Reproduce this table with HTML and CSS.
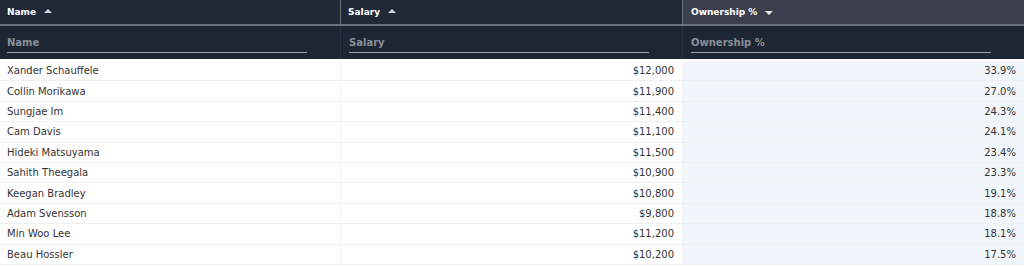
FILE: index.html
```html
<!DOCTYPE html>
<html>
<head>
<meta charset="utf-8">
<link rel="stylesheet" href="styles.css">
</head>
<body>
<div class="grid">
  <div class="head">
    <div class="hcell"><span>Name</span><span class="arrow up"></span></div>
    <div class="hcell"><span>Salary</span><span class="arrow up"></span></div>
    <div class="hcell sorted"><span>Ownership %</span><span class="arrow down"></span></div>
  </div>
  <div class="filters">
    <div class="fcell"><input class="finput" placeholder="Name"></div>
    <div class="fcell"><input class="finput" placeholder="Salary"></div>
    <div class="fcell"><input class="finput" placeholder="Ownership %"></div>
  </div>
  <div class="body">
    <div class="row"><div class="c">Xander Schauffele</div><div class="c num">$12,000</div><div class="c num own">33.9%</div></div>
    <div class="row"><div class="c">Collin Morikawa</div><div class="c num">$11,900</div><div class="c num own">27.0%</div></div>
    <div class="row"><div class="c">Sungjae Im</div><div class="c num">$11,400</div><div class="c num own">24.3%</div></div>
    <div class="row"><div class="c">Cam Davis</div><div class="c num">$11,100</div><div class="c num own">24.1%</div></div>
    <div class="row"><div class="c">Hideki Matsuyama</div><div class="c num">$11,500</div><div class="c num own">23.4%</div></div>
    <div class="row"><div class="c">Sahith Theegala</div><div class="c num">$10,900</div><div class="c num own">23.3%</div></div>
    <div class="row"><div class="c">Keegan Bradley</div><div class="c num">$10,800</div><div class="c num own">19.1%</div></div>
    <div class="row"><div class="c">Adam Svensson</div><div class="c num">$9,800</div><div class="c num own">18.8%</div></div>
    <div class="row"><div class="c">Min Woo Lee</div><div class="c num">$11,200</div><div class="c num own">18.1%</div></div>
    <div class="row"><div class="c">Beau Hossler</div><div class="c num">$10,200</div><div class="c num own">17.5%</div></div>
  </div>
</div>
</body>
</html>
```
FILE: styles.css
```css
html, body { margin: 0; padding: 0; background: #fff; }
body { font-family: "DejaVu Sans", Verdana, sans-serif; font-size: 10px; color: #333; }
.grid { width: 1024px; }
.head, .filters, .row { display: grid; grid-template-columns: 341px 342px 341px; }
.head { height: 24px; background: #222936; border-bottom: 2px solid #6b717c; font-size: 9px; }
.hcell { display: flex; align-items: center; gap: 8px; padding-left: 7px; color: #fff; font-weight: bold; border-right: 1px solid #6b717c; }
.hcell:last-child { border-right: none; }
.hcell.sorted { background: #3c404e; padding-left: 8px; }
.arrow { width: 0; height: 0; border-left: 4px solid transparent; border-right: 4px solid transparent; }
.arrow.up { border-bottom: 4px solid #d6d8dc; margin-top: -2px; }
.arrow.down { border-top: 4px solid #e6e8ea; margin-top: 1px; }
.filters { height: 33px; background: #1e2634; }
.fcell { display: flex; align-items: flex-start; padding: 0 0 0 7px; border-right: 1px solid #2a3240; }
.fcell:nth-child(2), .fcell:nth-child(3) { padding-left: 8px; }
.fcell:last-child { border-right: none; }
.finput { margin-top: 9px; width: 300px; height: 18px; box-sizing: border-box; background: transparent; border: none; border-bottom: 1px solid #9aa0a8; padding: 0 0 3px 0; font-family: inherit; font-size: 10px; font-weight: bold; color: #fff; outline: none; }
.finput::placeholder { color: #8a9098; }
.body { padding-top: 2px; }
.row { height: 20.4px; box-sizing: border-box; border-bottom: 1px solid #eef0f2; }
.c { display: flex; align-items: center; padding: 0 7px; border-right: 1px solid #f0f1f3; white-space: nowrap; }
.c.num { justify-content: flex-end; padding-right: 8px; }
.c.own { background: #f0f6fc; border-right: none; }
```
